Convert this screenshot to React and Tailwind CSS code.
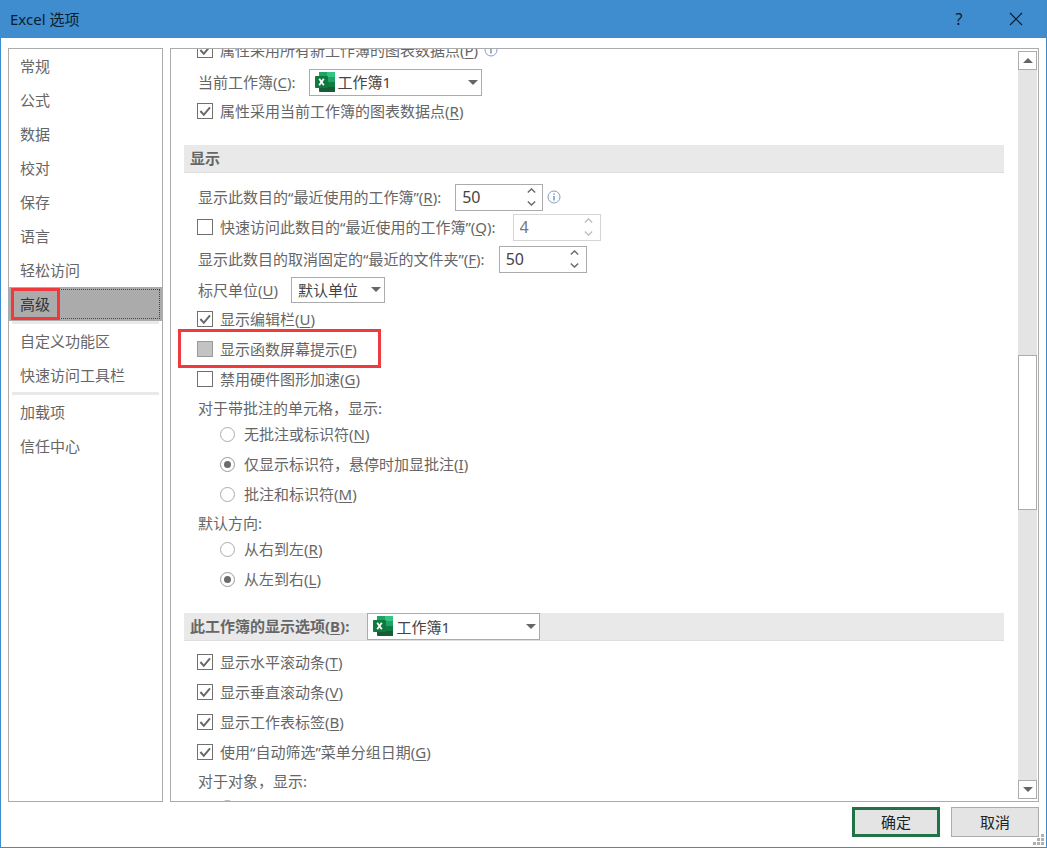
import { useState } from "react";
import clsx from "clsx";

const navGroups = [
  ["常规", "公式", "数据", "校对", "保存", "语言", "轻松访问", "高级"],
  ["自定义功能区", "快速访问工具栏"],
  ["加载项", "信任中心"],
];

// Label text followed by its access key, e.g. 显示编辑栏(U)
function KeyText({ text, k, colon }) {
  return (
    <span className="whitespace-nowrap">
      {text}
      {k && (
        <>
          (<u className="underline-offset-2">{k}</u>)
        </>
      )}
      {colon && ":"}
    </span>
  );
}

function Check({ text, k, colon, defaultChecked, mixed, children }) {
  const [checked, setChecked] = useState(!!defaultChecked);

  return (
    <label className="flex items-center gap-[7px]">
      <span className="grid size-4 shrink-0">
        <input
          type="checkbox"
          checked={checked}
          onChange={(e) => setChecked(e.target.checked)}
          className={clsx(
            "col-start-1 row-start-1 size-4 appearance-none border",
            mixed ? "border-[#9a9a9a] bg-[#c3c3c3]" : "border-[#707070] bg-white"
          )}
        />
        {checked && (
          <svg viewBox="0 0 16 16" className="pointer-events-none col-start-1 row-start-1 size-4">
            <path d="M3.4 8 6.8 11.8 13 4.4" fill="none" stroke="#686868" strokeWidth="2" />
          </svg>
        )}
      </span>
      <KeyText text={text} k={k} colon={colon} />
      {children}
    </label>
  );
}

function CheckRow(props) {
  return (
    <div className="flex h-[30px] items-center pl-[13px]">
      <Check {...props} />
    </div>
  );
}

function RadioRow({ name, text, k, defaultChecked }) {
  return (
    <div className="flex h-[30px] items-center pl-9">
      <label className="flex items-center gap-[9px]">
        <input
          type="radio"
          name={name}
          defaultChecked={defaultChecked}
          className="grid size-[15px] shrink-0 appearance-none place-items-center rounded-full border border-[#ababab] bg-white checked:border-[#999999] checked:before:size-[7px] checked:before:rounded-full checked:before:bg-[#6b6b6b]"
        />
        <KeyText text={text} k={k} />
      </label>
    </div>
  );
}

function GroupLabel({ children }) {
  return <div className="flex h-[25px] items-center pt-[2px] pl-[14px]">{children}</div>;
}

function Chevron({ up }) {
  return (
    <svg viewBox="0 0 9 5" className="h-[5px] w-[9px]">
      <path d={up ? "M.8 4.4 4.5 .9 8.2 4.4" : "M.8 .6 4.5 4.1 8.2 .6"} fill="none" stroke="currentColor" strokeWidth="1.4" />
    </svg>
  );
}

function Spinner({ id, value, disabled }) {
  const [num, setNum] = useState(value);

  return (
    <div
      className={clsx(
        "flex h-[27px] w-[88px] border bg-white",
        disabled ? "border-[#d5d5d5] text-[#c0c0c0]" : "border-[#ababab] text-[#6a6a6a]"
      )}
    >
      <input
        id={id}
        type="text"
        value={num}
        disabled={disabled}
        onChange={(e) => setNum(e.target.value)}
        className={clsx("w-0 flex-1 pl-[6px] text-base outline-none", disabled ? "text-[#777777]" : "text-[#444444]")}
      />
      <div className="flex w-[22px] flex-col">
        <button type="button" aria-label="增加" disabled={disabled} onClick={() => setNum(Number(num) + 1)} className="flex flex-1 items-center justify-center">
          <Chevron up />
        </button>
        <button type="button" aria-label="减少" disabled={disabled} onClick={() => setNum(Number(num) - 1)} className="flex flex-1 items-center justify-center">
          <Chevron />
        </button>
      </div>
    </div>
  );
}

function ExcelIcon({ className }) {
  return (
    <svg viewBox="0 0 20 20" className={className}>
      <path d="M5 0h15v20H5a1 1 0 0 1-1-1V1a1 1 0 0 1 1-1z" fill="#185c37" />
      <path d="M5 0h7v5H4V1a1 1 0 0 1 1-1z" fill="#21a366" />
      <path d="M12 0h8v5h-8z" fill="#33c481" />
      <path d="M4 5h8v5H4z" fill="#107c41" />
      <path d="M12 5h8v5h-8z" fill="#21a366" />
      <path d="M12 10h8v5h-8z" fill="#107c41" />
      <rect x="0" y="4" width="13" height="12" rx="1" fill="#0f7a40" />
      <path d="M4.2 6.8 8.8 13.2M8.8 6.8 4.2 13.2" stroke="#fff" strokeWidth="1.8" />
    </svg>
  );
}

function Triangle({ up, className }) {
  return (
    <svg viewBox="0 0 10 5" className={clsx("h-[5px] w-[10px]", className)}>
      <path d={up ? "M0 5 5 0 10 5z" : "M0 0h10L5 5z"} fill="#666666" />
    </svg>
  );
}

function WorkbookSelect({ id }) {
  return (
    <div className="relative w-[173px]">
      <select id={id} className="block h-[27px] w-full appearance-none border border-[#ababab] bg-white pl-7 text-[#444444]">
        <option>工作簿1</option>
      </select>
      <ExcelIcon className="pointer-events-none absolute top-[3px] left-[6px] size-5" />
      <Triangle className="pointer-events-none absolute top-[11px] right-1" />
    </div>
  );
}

function InfoIcon() {
  return (
    <svg viewBox="0 0 14 14" className="size-[14px]">
      <circle cx="7" cy="7" r="6" fill="#fff" stroke="#7f9fc6" />
      <path d="M7 6v4.5M7 3.4v1.4" stroke="#4f7cb5" strokeWidth="1.2" />
    </svg>
  );
}

function Sidebar({ current, onSelect }) {
  return (
    <nav className="w-[155px] shrink-0 border border-[#ababab]">
      {navGroups.map((group, i) => (
        <div key={i}>
          {i > 0 && <hr className="mx-[3px] h-[3px] border-0 bg-[#e9e9e9]" />}
          {group.map((item) => (
            <button
              key={item}
              type="button"
              onClick={() => onSelect(item)}
              className={clsx(
                "relative flex h-[34px] w-full items-center pl-[11px] text-left",
                item === current && "bg-[#ababab] text-[#333333] outline-1 -outline-offset-3 outline-dotted outline-[#444444]"
              )}
            >
              {item}
              {item === "高级" && <span className="absolute top-px left-[2px] h-8 w-[49px] border-3 border-[#ee3a3d]" />}
            </button>
          ))}
        </div>
      ))}
    </nav>
  );
}

function ScrollBar() {
  return (
    <div className="mt-[2px] mr-px mb-[2px] flex w-[19px] shrink-0 flex-col bg-[#e4e4e4]">
      <button type="button" aria-label="向上滚动" className="flex h-[19px] items-center justify-center border border-[#ababab] bg-white">
        <Triangle up />
      </button>
      <div className="flex-[286]" />
      <div className="flex-[153] border border-[#ababab] bg-white" />
      <div className="flex-[271]" />
      <button type="button" aria-label="向下滚动" className="flex h-[19px] items-center justify-center border border-[#ababab] bg-white">
        <Triangle />
      </button>
    </div>
  );
}

export default function App() {
  const [page, setPage] = useState("高级");

  return (
    <div className="flex h-screen flex-col overflow-hidden border-x border-b border-[#3f8ccb] bg-white font-['Noto_Sans','Noto_Sans_CJK_SC',sans-serif] text-[15px] leading-5 text-[#666666]">
      {/* 标题栏 */}
      <header className="flex h-[38px] shrink-0 items-center bg-[#3f8dce] pr-[23px] pl-[9px] text-[#0a1c30]">
        <h1 className="flex-1">Excel 选项</h1>
        <button type="button" aria-label="帮助" className="mr-[42px] w-4 text-base">?</button>
        <button type="button" aria-label="关闭">
          <svg viewBox="0 0 14 14" className="size-[14px]">
            <path d="M1 1 13 13M13 1 1 13" stroke="currentColor" strokeWidth="1.2" />
          </svg>
        </button>
      </header>

      <div className="flex min-h-0 flex-1 gap-[7px] px-[7px] pt-[10px]">
        <Sidebar current={page} onSelect={setPage} />

        <main className="flex min-w-0 flex-1 border border-[#ababab]">
          <div className="min-w-0 flex-1 overflow-hidden pr-[14px] pl-[13px]">
            {/* 图表 */}
            <div className="-mt-[15px] flex h-8 items-center gap-[6px] pl-[13px]">
              <Check text="属性采用所有新工作簿的图表数据点" k="P" defaultChecked />
              <InfoIcon />
            </div>
            <div className="flex h-8 items-center gap-[13px] pl-[14px]">
              <label htmlFor="chart-book"><KeyText text="当前工作簿" k="C" colon /></label>
              <WorkbookSelect id="chart-book" />
            </div>
            <div className="flex h-[26px] items-center pl-[13px]">
              <Check text="属性采用当前工作簿的图表数据点" k="R" defaultChecked />
            </div>

            {/* 显示 */}
            <h2 className="mt-[21px] mb-[9px] flex h-7 items-center border-b border-[#dedede] bg-[#e9e9e9] pb-[2px] pl-[6px] font-bold">
              显示
            </h2>
            <div className="flex h-[30px] items-center gap-[14px] pl-[14px]">
              <label htmlFor="recent-books"><KeyText text="显示此数目的“最近使用的工作簿”" k="R" colon /></label>
              <div className="flex items-center gap-1">
                <Spinner id="recent-books" value="50" />
                <InfoIcon />
              </div>
            </div>
            <div className="flex h-[30px] items-center gap-[17px] pl-[13px]">
              <Check text="快速访问此数目的“最近使用的工作簿”" k="Q" colon />
              <Spinner id="quick-books" value="4" disabled />
            </div>
            <div className="flex h-[34px] items-center gap-[14px] pl-[14px]">
              <label htmlFor="recent-folders"><KeyText text="显示此数目的取消固定的“最近的文件夹”" k="F" colon /></label>
              <Spinner id="recent-folders" value="50" />
            </div>
            <div className="flex h-7 items-center gap-[13px] pl-[14px]">
              <label htmlFor="ruler-unit"><KeyText text="标尺单位" k="U" /></label>
              <div className="relative">
                <select id="ruler-unit" className="block h-[26px] w-[94px] appearance-none border border-[#ababab] bg-white pl-[6px] text-[#444444]">
                  <option>默认单位</option>
                </select>
                <Triangle className="pointer-events-none absolute top-[10px] right-1" />
              </div>
            </div>
            <CheckRow text="显示编辑栏" k="U" defaultChecked />
            <div className="relative">
              <CheckRow text="显示函数屏幕提示" k="F" mixed />
              <span className="pointer-events-none absolute -top-[5px] -left-[6px] h-[39px] w-[203px] border-3 border-[#ee3a3d]" />
            </div>
            <CheckRow text="禁用硬件图形加速" k="G" />

            <GroupLabel>对于带批注的单元格，显示:</GroupLabel>
            <RadioRow name="comments" text="无批注或标识符" k="N" />
            <RadioRow name="comments" text="仅显示标识符，悬停时加显批注" k="I" defaultChecked />
            <RadioRow name="comments" text="批注和标识符" k="M" />

            <GroupLabel>默认方向:</GroupLabel>
            <RadioRow name="direction" text="从右到左" k="R" />
            <RadioRow name="direction" text="从左到右" k="L" defaultChecked />

            {/* 此工作簿的显示选项 */}
            <div className="mt-[19px] mb-[6px] flex h-7 items-center gap-[18px] border-b border-[#dedede] bg-[#e9e9e9] pl-[6px]">
              <label htmlFor="display-book" className="pb-[2px] font-bold"><KeyText text="此工作簿的显示选项" k="B" colon /></label>
              <WorkbookSelect id="display-book" />
            </div>
            <CheckRow text="显示水平滚动条" k="T" defaultChecked />
            <CheckRow text="显示垂直滚动条" k="V" defaultChecked />
            <CheckRow text="显示工作表标签" k="B" defaultChecked />
            <CheckRow text="使用“自动筛选”菜单分组日期" k="G" defaultChecked />
            <GroupLabel>对于对象，显示:</GroupLabel>
            <div className="flex h-[30px] items-center pl-9">
              <input type="radio" name="objects" aria-label="全部" className="size-[15px] appearance-none rounded-full border border-[#ababab] bg-white" />
            </div>
          </div>
          <ScrollBar />
        </main>
      </div>

      {/* 底部按钮 */}
      <footer className="relative flex shrink-0 justify-end gap-[11px] px-[7px] pt-[5px] pb-[10px] text-[#222222]">
        <button type="button" className="h-[30px] w-[88px] border-3 border-[#217346] bg-[#e4e4e4]">确定</button>
        <button type="button" className="h-[30px] w-[88px] border border-[#ababab] bg-[#e4e4e4]">取消</button>
        <svg viewBox="0 0 11 11" className="absolute right-[2px] bottom-[2px] size-[11px]" fill="#b0b0b0">
          <path d="M8 0h3v3H8zM4 4h3v3H4zM8 4h3v3H8zM0 8h3v3H0zM4 8h3v3H4zM8 8h3v3H8z" />
        </svg>
      </footer>
    </div>
  );
}
